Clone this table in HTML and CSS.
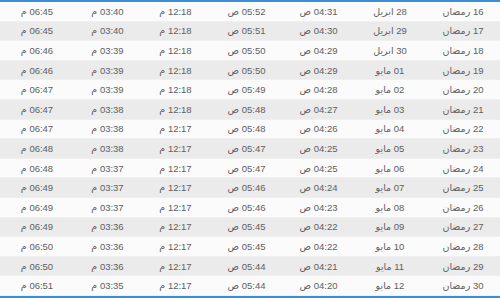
FILE: index.html
```html
<!DOCTYPE html>
<html lang="ar" dir="rtl">
<head>
<meta charset="utf-8">
<title>إمساكية رمضان</title>
<link rel="stylesheet" href="styles.css">
</head>
<body>
<div class="table">
  <div class="row"><span>16 رمضان</span><span>28 ابريل</span><span>04:31 ص</span><span>05:52 ص</span><span>12:18 م</span><span>03:40 م</span><span>06:45 م</span></div>
  <div class="row"><span>17 رمضان</span><span>29 ابريل</span><span>04:30 ص</span><span>05:51 ص</span><span>12:18 م</span><span>03:40 م</span><span>06:45 م</span></div>
  <div class="row"><span>18 رمضان</span><span>30 ابريل</span><span>04:29 ص</span><span>05:50 ص</span><span>12:18 م</span><span>03:39 م</span><span>06:46 م</span></div>
  <div class="row"><span>19 رمضان</span><span>01 مايو</span><span>04:29 ص</span><span>05:50 ص</span><span>12:18 م</span><span>03:39 م</span><span>06:46 م</span></div>
  <div class="row"><span>20 رمضان</span><span>02 مايو</span><span>04:28 ص</span><span>05:49 ص</span><span>12:18 م</span><span>03:39 م</span><span>06:47 م</span></div>
  <div class="row"><span>21 رمضان</span><span>03 مايو</span><span>04:27 ص</span><span>05:48 ص</span><span>12:18 م</span><span>03:38 م</span><span>06:47 م</span></div>
  <div class="row"><span>22 رمضان</span><span>04 مايو</span><span>04:26 ص</span><span>05:48 ص</span><span>12:17 م</span><span>03:38 م</span><span>06:47 م</span></div>
  <div class="row"><span>23 رمضان</span><span>05 مايو</span><span>04:25 ص</span><span>05:47 ص</span><span>12:17 م</span><span>03:38 م</span><span>06:48 م</span></div>
  <div class="row"><span>24 رمضان</span><span>06 مايو</span><span>04:25 ص</span><span>05:47 ص</span><span>12:17 م</span><span>03:37 م</span><span>06:48 م</span></div>
  <div class="row"><span>25 رمضان</span><span>07 مايو</span><span>04:24 ص</span><span>05:46 ص</span><span>12:17 م</span><span>03:37 م</span><span>06:49 م</span></div>
  <div class="row"><span>26 رمضان</span><span>08 مايو</span><span>04:23 ص</span><span>05:46 ص</span><span>12:17 م</span><span>03:37 م</span><span>06:49 م</span></div>
  <div class="row"><span>27 رمضان</span><span>09 مايو</span><span>04:22 ص</span><span>05:45 ص</span><span>12:17 م</span><span>03:36 م</span><span>06:49 م</span></div>
  <div class="row"><span>28 رمضان</span><span>10 مايو</span><span>04:22 ص</span><span>05:45 ص</span><span>12:17 م</span><span>03:36 م</span><span>06:50 م</span></div>
  <div class="row"><span>29 رمضان</span><span>11 مايو</span><span>04:21 ص</span><span>05:44 ص</span><span>12:17 م</span><span>03:36 م</span><span>06:50 م</span></div>
  <div class="row"><span>30 رمضان</span><span>12 مايو</span><span>04:20 ص</span><span>05:44 ص</span><span>12:17 م</span><span>03:35 م</span><span>06:51 م</span></div>
</div>
</body>
</html>
```
FILE: styles.css
```css
html, body {
  margin: 0;
  padding: 0;
  background: #ffffff;
}
body {
  width: 500px;
  height: 300px;
  overflow: hidden;
  font-family: "Liberation Sans", "DejaVu Sans", sans-serif;
  font-size: 9.5px;
  color: #606060;
}
.table {
  height: 298px;
  box-sizing: border-box;
  border-top: 2px solid #3b8fd6;
  border-bottom: 2px solid #3b8fd6;
  display: grid;
  grid-template-rows: repeat(15, 1fr);
}
.row {
  direction: rtl;
  display: grid;
  grid-template-columns: 74px 72px 71px 73px 69px 67px 74px;
  align-items: center;
  background: #fbfbfb;
  border-bottom: 1px solid #f0f0f0;
}
.row:nth-child(even) {
  background: #ebebeb;
}
.row span {
  text-align: center;
  white-space: nowrap;
}
```
